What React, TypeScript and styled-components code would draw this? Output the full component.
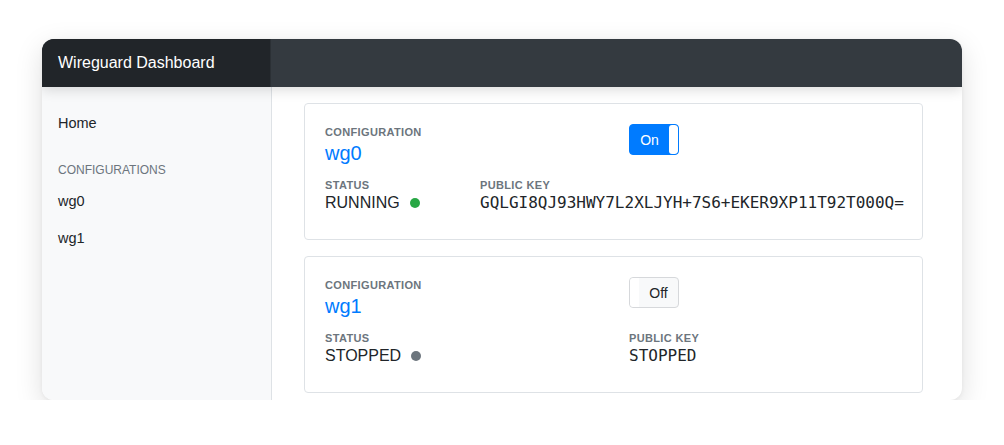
import React from "react";
import styled, { createGlobalStyle } from "styled-components";

const GlobalStyle = createGlobalStyle`
  html, body {
    margin: 0;
    padding: 0;
    background: #ffffff;
  }
  body {
    font-family: "Liberation Sans", Arial, sans-serif;
    color: #212529;
    -webkit-font-smoothing: antialiased;
  }
`;

const Page = styled.div`
  padding: 39px 42px 0 42px;
  width: 1004px;
  box-sizing: border-box;
`;

const Window = styled.div`
  width: 920px;
  height: 361px;
  border-radius: 12px;
  overflow: hidden;
  background: #ffffff;
  box-shadow: 0 8px 28px rgba(0, 0, 0, 0.13), 0 1px 4px rgba(0, 0, 0, 0.05);
  display: flex;
  flex-direction: column;
`;

const Navbar = styled.header`
  position: relative;
  z-index: 2;
  height: 48px;
  flex: 0 0 48px;
  display: flex;
  background: #343a40;
  box-shadow: 0 3px 12px rgba(0, 0, 0, 0.14);
`;

const Brand = styled.div`
  width: 229px;
  flex: 0 0 229px;
  background: #212529;
  color: #ffffff;
  font-size: 16px;
  display: flex;
  align-items: center;
  padding-left: 16px;
  box-sizing: border-box;
  border-right: 1px solid #2b3035;
`;

const Body = styled.div`
  flex: 1;
  display: flex;
  min-height: 0;
`;

const Sidebar = styled.nav`
  width: 230px;
  flex: 0 0 230px;
  box-sizing: border-box;
  background: #f8f9fa;
  border-right: 1px solid #dee2e6;
  padding-top: 26px;
  display: flex;
  flex-direction: column;
`;

const NavLink = styled.a`
  font-size: 14.5px;
  color: #212529;
  padding: 0 16px;
  line-height: 20px;
  margin-bottom: 17px;
  text-decoration: none;
`;

const NavHeading = styled.div`
  font-size: 12px;
  color: #6c757d;
  text-transform: uppercase;
  padding: 0 16px;
  margin: 12px 0 13px;
  line-height: 16px;
`;

const Main = styled.main`
  flex: 1;
  overflow: hidden;
  padding: 16px 39px 0 32px;
  display: flex;
  flex-direction: column;
  gap: 16px;
`;

const Card = styled.section`
  border: 1px solid #dee2e6;
  border-radius: 4px;
  padding: 20px;
  height: 137px;
  box-sizing: border-box;
  flex: 0 0 auto;
`;

const Row = styled.div<{ $split: number }>`
  display: grid;
  grid-template-columns: ${(p) => p.$split}px 1fr;
`;

const TopRow = styled.div`
  display: grid;
  grid-template-columns: 304px 1fr;
  margin-bottom: 11px;
`;

const Field = styled.div`
  display: flex;
  flex-direction: column;
`;

const Label = styled.div`
  font-size: 11px;
  font-weight: 700;
  letter-spacing: 0.35px;
  color: #6c757d;
  text-transform: uppercase;
  line-height: 16px;
`;

const Name = styled.a`
  font-size: 20px;
  color: #007bff;
  line-height: 26px;
  text-decoration: none;
`;

const StatusText = styled.div`
  font-size: 16px;
  line-height: 20px;
  display: flex;
  align-items: center;
  gap: 10px;
`;

const Dot = styled.span<{ $color: string }>`
  width: 10px;
  height: 10px;
  border-radius: 50%;
  background: ${(p) => p.$color};
  display: inline-block;
`;

const Key = styled.div`
  font-family: "DejaVu Sans Mono", "Liberation Mono", monospace;
  font-size: 16px;
  line-height: 20px;
  white-space: nowrap;
`;

const Switch = styled.button<{ $on: boolean }>`
  width: 50px;
  height: 31px;
  padding: 0;
  box-sizing: border-box;
  border-radius: 4px;
  border: 1px solid ${(p) => (p.$on ? "#007bff" : "#d6d8db")};
  background: ${(p) => (p.$on ? "#007bff" : "#f8f9fa")};
  color: ${(p) => (p.$on ? "#ffffff" : "#212529")};
  display: flex;
  flex-direction: ${(p) => (p.$on ? "row-reverse" : "row")};
  overflow: hidden;
  font-family: "Liberation Sans", Arial, sans-serif;
  font-size: 14px;
  cursor: pointer;
`;

const Knob = styled.span<{ $on: boolean }>`
  width: 9px;
  flex: 0 0 9px;
  height: 100%;
  background: #ffffff;
  border-radius: ${(p) => (p.$on ? "3px" : "3px 0 0 3px")};
`;

const SwitchText = styled.span`
  flex: 1;
  display: flex;
  align-items: center;
  justify-content: center;
`;

type Conf = {
  name: string;
  running: boolean;
  publicKey: string;
  split: number;
};

const configs: Conf[] = [
  {
    name: "wg0",
    running: true,
    publicKey: "GQLGI8QJ93HWY7L2XLJYH+7S6+EKER9XP11T92T000Q=",
    split: 155,
  },
  { name: "wg1", running: false, publicKey: "STOPPED", split: 304 },
];

function ConfigCard({ conf }: { conf: Conf }) {
  return (
    <Card>
      <TopRow>
        <Field>
          <Label>Configuration</Label>
          <Name href="#">{conf.name}</Name>
        </Field>
        <div>
          <Switch $on={conf.running}>
            <Knob $on={conf.running} />
            <SwitchText>{conf.running ? "On" : "Off"}</SwitchText>
          </Switch>
        </div>
      </TopRow>
      <Row $split={conf.split}>
        <Field>
          <Label>Status</Label>
          <StatusText>
            {conf.running ? "RUNNING" : "STOPPED"}
            <Dot $color={conf.running ? "#28a745" : "#6c757d"} />
          </StatusText>
        </Field>
        <Field>
          <Label>Public Key</Label>
          <Key>{conf.publicKey}</Key>
        </Field>
      </Row>
    </Card>
  );
}

export default function App() {
  return (
    <>
      <GlobalStyle />
      <Page>
        <Window>
          <Navbar>
            <Brand>Wireguard Dashboard</Brand>
          </Navbar>
          <Body>
            <Sidebar>
              <NavLink href="#">Home</NavLink>
              <NavHeading>Configurations</NavHeading>
              {configs.map((c) => (
                <NavLink key={c.name} href="#">
                  {c.name}
                </NavLink>
              ))}
            </Sidebar>
            <Main>
              {configs.map((c) => (
                <ConfigCard key={c.name} conf={c} />
              ))}
            </Main>
          </Body>
        </Window>
      </Page>
    </>
  );
}
